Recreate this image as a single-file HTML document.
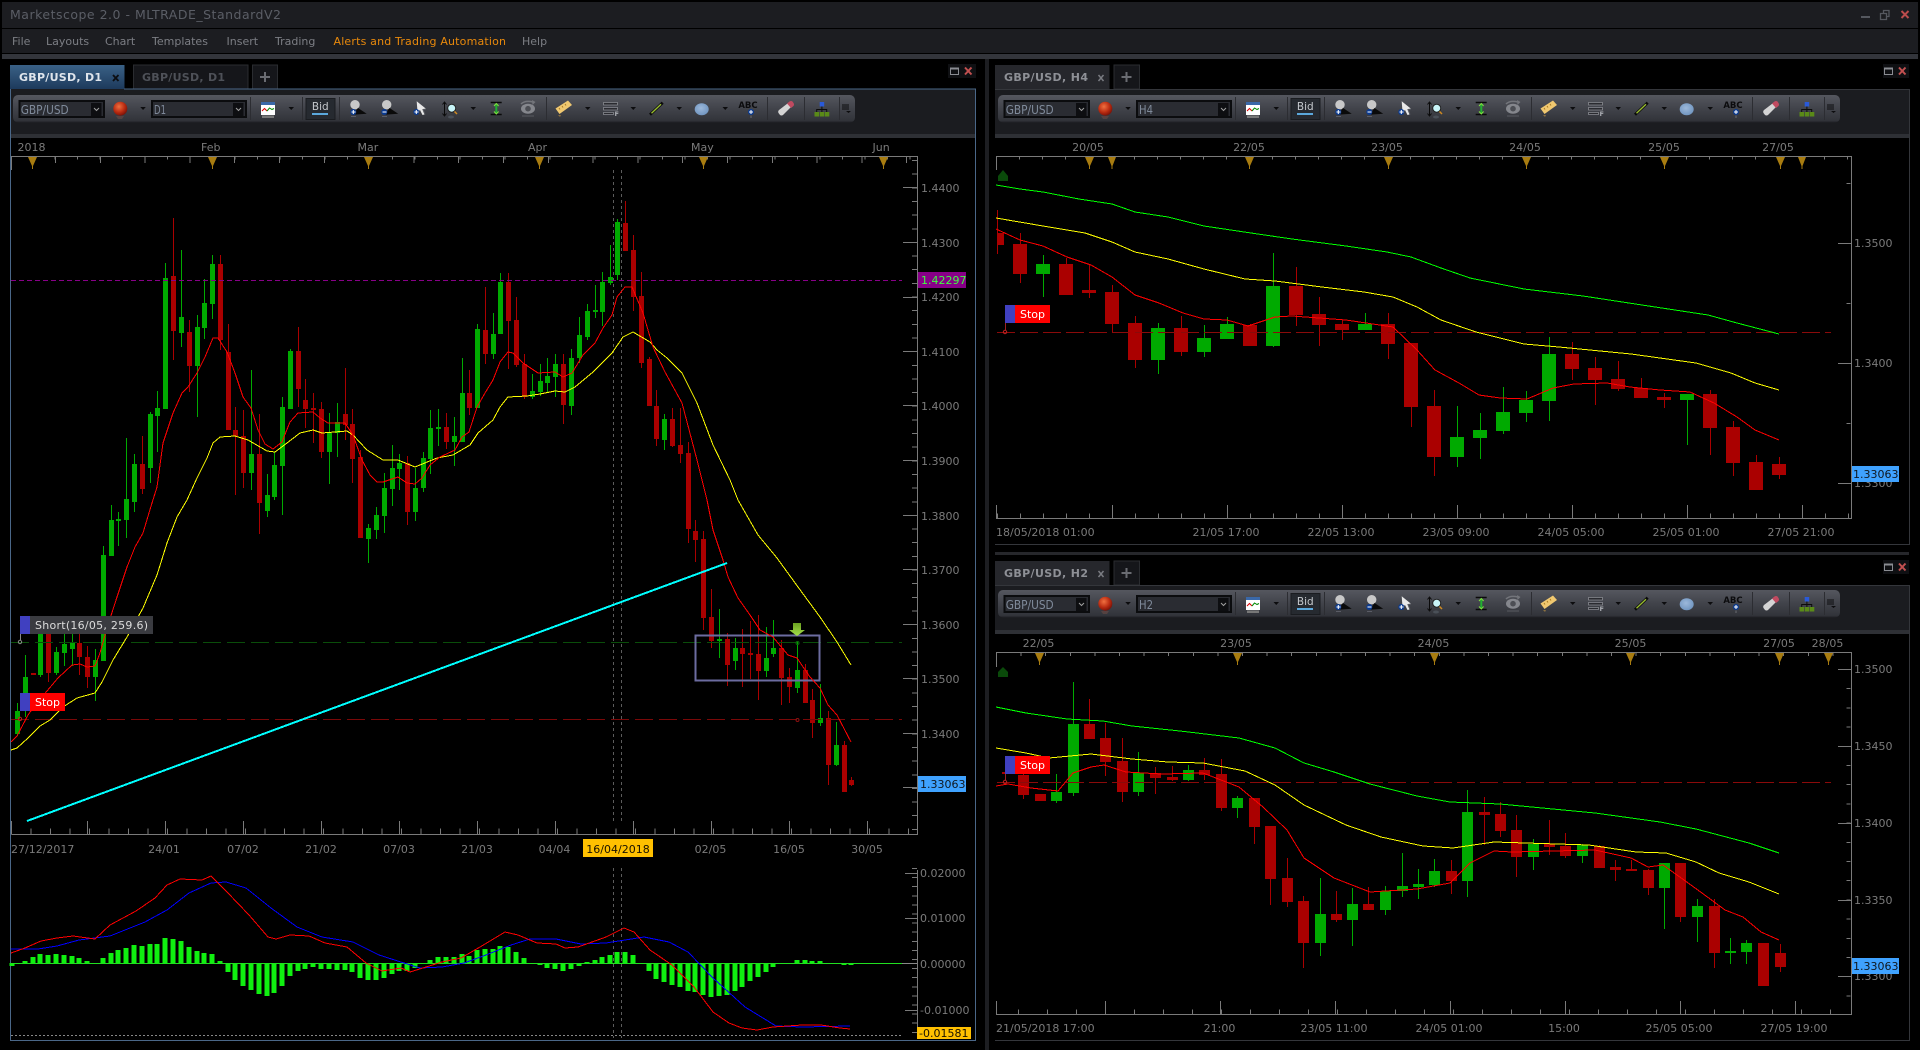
<!DOCTYPE html>
<html><head><meta charset="utf-8"><title>Marketscope 2.0</title>
<style>
html,body{margin:0;padding:0;background:#000;overflow:hidden}
svg{display:block}
text{font-family:"DejaVu Sans","Liberation Sans",sans-serif;font-size:11px;fill:#7b7b7b}
.c{text-anchor:middle}
.m{fill:#7c7e84}
.b{font-weight:bold}
.t{fill:#7f8a9a;font-size:12px}
.cr{shape-rendering:crispEdges}
.l{fill:none;stroke-width:1;shape-rendering:crispEdges}
</style></head><body>
<svg width="1920" height="1050" viewBox="0 0 1920 1050" xmlns="http://www.w3.org/2000/svg">
<defs>
<linearGradient id="tbg" x1="0" y1="0" x2="0" y2="1"><stop offset="0" stop-color="#55575f"/><stop offset=".5" stop-color="#41434a"/><stop offset=".93" stop-color="#32343a"/><stop offset="1" stop-color="#1f2024"/></linearGradient>
<linearGradient id="act" x1="0" y1="0" x2="0" y2="1"><stop offset="0" stop-color="#3a6186"/><stop offset="1" stop-color="#1d3a5c"/></linearGradient>
<linearGradient id="arr" x1="0" y1="0" x2="0" y2="1"><stop offset="0" stop-color="#6aa020"/><stop offset="1" stop-color="#a4e04a"/></linearGradient>
<radialGradient id="rb" cx=".4" cy=".35" r=".7"><stop offset="0" stop-color="#f07040"/><stop offset=".6" stop-color="#b82a10"/><stop offset="1" stop-color="#701008"/></radialGradient>
<radialGradient id="bb" cx=".45" cy=".4" r=".7"><stop offset="0" stop-color="#9cb8da"/><stop offset="1" stop-color="#6a90bc"/></radialGradient>
<g id="tb">
<rect x="13" y="95" width="842" height="27.500" rx="5" fill="url(#tbg)"/>
<rect x="19.500" y="101" width="84.500" height="16" fill="#2a2c32" stroke="#0b0c0e" stroke-width="2"/>
<rect x="91" y="103" width="10.500" height="13" fill="#0d0e11"/>
<path d="M94 108l2.500 2.500 2.500-2.500" fill="none" stroke="#a0a0a0"/>
<rect x="152" y="101" width="94" height="16" fill="#2a2c32" stroke="#0b0c0e" stroke-width="2"/>
<rect x="233" y="103" width="10.500" height="13" fill="#0d0e11"/>
<path d="M236 108l2.500 2.500 2.500-2.500" fill="none" stroke="#a0a0a0"/>
<circle cx="120.300" cy="108.700" r="7" fill="url(#rb)"/>
<path d="M116 116h8l-2 3h-4z" fill="#6a4a44" opacity=".6"/>
<path d="M140.300 107h5.500l-2.750 3zM288.500 107h5.500l-2.750 3zM470.500 107h5.500l-2.750 3zM585 107h5.500l-2.750 3zM630.500 107h5.500l-2.750 3zM676.500 107h5.500l-2.750 3zM722.500 107h5.500l-2.750 3z" fill="#0c0c0e"/>
<path d="M250.500 97v23M302.500 97v23M339.500 97v23M546.500 97v23M767.500 97v23M804.500 97v23M839.500 97v23" stroke="#2c2d32" class="cr"/>
<rect x="261" y="102" width="14" height="13" fill="#fff"/><rect x="261" y="102" width="14" height="3" fill="#3a68a8"/>
<path d="M262 111l2.500-2.500 2.500 2.500" fill="none" stroke="#d00"/><path d="M267 111l2.500-3 2.500 1.500 2-1" fill="none" stroke="#080"/>
<rect x="262" y="115.500" width="12" height="2.500" fill="#777"/>
<rect x="306" y="98.500" width="29" height="21" fill="#262a30" stroke="#1a1c20"/>
<rect x="312" y="113" width="16" height="2" fill="#5ba8dc"/>
<circle cx="355" cy="104.700" r="4.700" fill="#c8c8c8"/><path d="M358 108l8.700 5.700-13.700 1z" fill="#0a0a0a"/><circle cx="353.300" cy="112" r="3" fill="#0a3a90"/><path d="M351.500 112h4M353.300 110v4" stroke="#fff"/><path d="M351 116.500h5" stroke="#5a5c66"/>
<circle cx="386.700" cy="104.700" r="4.700" fill="#c8c8c8"/><path d="M389.500 108l8.700 5.700-13.700 1z" fill="#0a0a0a"/><circle cx="384.300" cy="112" r="3" fill="#0a3a90"/><path d="M382.500 112h4" stroke="#fff"/><path d="M382 116.500h5" stroke="#5a5c66"/>
<path d="M416.700 101.300l9.300 7.500-3.500.7 2 5-2 .5-2.500-5-2.500 2z" fill="#e8e8e8"/><path d="M426 109l-3 .5 2 5" fill="none" stroke="#5a5c62"/><circle cx="416.300" cy="112" r="3" fill="#0a3a90"/><path d="M414.500 112h4M416.300 110v4" stroke="#fff"/>
<path d="M444.500 103v12M442.500 104.500l2-2.500 2 2.500M442.500 113.500l2 2.500 2-2.500" fill="none" stroke="#0a0a0a"/><circle cx="451.700" cy="108.200" r="4" fill="#c8f4f8" stroke="#222"/><path d="M454.500 111.500l2.500 2.500" stroke="#d08a20" stroke-width="1.500"/><ellipse cx="451" cy="117" rx="3" ry="1.500" fill="#4a5058"/>
<path d="M490.700 102.500h11M490.700 114.500h11" stroke="#0a0a0a" stroke-width="1.500"/><path d="M496.300 103.500v10" stroke="#20b030" stroke-width="2"/><path d="M494 106l2.300-2.500 2.300 2.500M494 111.500l2.300 2.500 2.300-2.500" fill="none" stroke="#80e040"/>
<ellipse cx="528" cy="108.700" rx="7" ry="5" fill="#85878d"/><circle cx="528" cy="108.700" r="2.800" fill="#4c4e54"/><path d="M521 104c3-3 8-3 12-2" fill="none" stroke="#73757b" stroke-width="1.500"/><path d="M532 100l3.500 2-3 3z" fill="#73757b"/><path d="M522 116h12" stroke="#585a60"/>
<path d="M555.500 108.500l12.500-8 4 4.500-12.500 9z" fill="#f0c870"/><path d="M559 108l1 1.500M562 106l1 1.500M565 104l1 1.500" stroke="#a87a20"/><path d="M558 115l2 2 1-2z" fill="#8a7040"/>
<path d="M603.500 102.500h14v2.500h-14zM603.500 107.500h14v2.500h-14zM603.500 112.500h10v2h-10z" fill="#2a2b30" stroke="#8a8c92" stroke-width=".8"/>
<path d="M650 114.700l12.700-12" stroke="#0a0a0a" stroke-width="2.800"/><path d="M651.500 113.200l9.500-9" stroke="#98bc30" stroke-width="1.400"/>
<ellipse cx="701.700" cy="109.300" rx="7" ry="6" fill="url(#bb)"/>
<circle cx="751" cy="112" r="3" fill="#0a3a90"/><path d="M749 112h4M751 110v4" stroke="#fff"/><path d="M751 115.500v2.500" stroke="#6a6c72"/>
<path d="M779 110l8.500-6.500 3.500 3.500-8 8c-1 .7-2 .7-3 0l-1.500-2c-.5-1-.5-2 .5-3z" fill="#d4d4d4"/><path d="M787 103.500l2.500-2c1-.7 2-.7 3 0l1 1.500c.7 1 .7 2 0 3l-2.500 2z" fill="#c04a60"/>
<rect x="819.700" y="102" width="4.500" height="4.500" fill="#2a5ad8"/>
<path d="M821.900 106.500v3M816.700 112v-2.500h10v2.500M821.900 109.500v2.500" fill="none" stroke="#0c0c0c"/>
<rect x="814.500" y="112" width="4.500" height="4.500" fill="#5a8a18"/><rect x="819.700" y="112" width="4.500" height="4.500" fill="#5a8a18"/><rect x="824.800" y="112" width="4.500" height="4.500" fill="#5a8a18"/>
<path d="M842 105h7M842 107h7M842 109h7" stroke="#0c0c0e" class="cr"/><path d="M846 111h5l-2.500 2z" fill="#0c0c0e"/>
</g>
</defs>

<rect width="1920" height="1050" fill="#000"/>
<rect x="2" y="2" width="1916" height="26" fill="#1c1d21"/>
<rect x="2" y="29" width="1916" height="24" fill="#1c1d21"/>
<rect x="2" y="54" width="1916" height="5" fill="#33353b"/>
<text x="10" y="19" textLength="271" lengthAdjust="spacing" style="font-size:12.500px;fill:#5b5e66">Marketscope 2.0 - MLTRADE_StandardV2</text>
<text x="12" y="45" class="m">File</text><text x="46" y="45" class="m">Layouts</text><text x="105" y="45" class="m">Chart</text><text x="152" y="45" class="m">Templates</text><text x="226.500" y="45" class="m">Insert</text><text x="275" y="45" class="m">Trading</text>
<text x="333.500" y="45" textLength="172.500" lengthAdjust="spacing" style="fill:#e8890c">Alerts and Trading Automation</text>
<text x="522" y="45" class="m">Help</text>
<path d="M1861 16h9v2h-9z" fill="#55585f"/>
<path d="M1880.500 13.500h6v6h-6zM1883.500 13v-2.500h5.500v6h-2" fill="none" stroke="#55585f" stroke-width="1.300"/>
<path d="M1901.500 11l7 7M1908.500 11l-7 7" stroke="#bb4c4c" stroke-width="2"/>

<rect x="985" y="59" width="4" height="991" fill="#1d1e22"/>

<!-- left panel -->
<rect x="10" y="89" width="966" height="45" fill="#1b1c20"/>
<rect x="10" y="134" width="966" height="4" fill="#2e3035"/>
<rect x="10" y="65" width="114.500" height="24" fill="url(#act)"/>
<rect x="133.500" y="65" width="114.500" height="24" fill="#15161a" stroke="#2a2c30"/>
<rect x="252.500" y="65" width="25" height="24" fill="#15161a" stroke="#2a2c30"/>
<text x="19" y="81" class="b" textLength="83" lengthAdjust="spacing" style="fill:#dfe5ec">GBP/USD, D1</text>
<path d="M113 75l5.500 6M118.500 75l-5.500 6" stroke="#0c0e12" stroke-width="1.800"/>
<text x="142" y="81" class="b" textLength="83" lengthAdjust="spacing" style="fill:#4e5158">GBP/USD, D1</text>
<path d="M260 77h10M265 72v10" stroke="#6a6c72" stroke-width="2"/>
<rect x="948" y="64" width="28" height="14" fill="#0f1013"/>
<rect x="950.500" y="68.500" width="8" height="6" fill="none" stroke="#8a8c92" stroke-width="1"/><path d="M950 68.500h9" stroke="#8a8c92" stroke-width="2"/>
<path d="M965 67.500l6.500 7M971.500 67.500l-6.500 7" stroke="#c25050" stroke-width="2"/>
<use href="#tb"/>
<g><text x="20.700" y="114" class="t" textLength="48" lengthAdjust="spacingAndGlyphs">GBP/USD</text><text x="154" y="114" class="t" textLength="12" lengthAdjust="spacingAndGlyphs">D1</text><text x="320.300" y="110" class="c" style="fill:#c4c8cc;font-size:10.500px">Bid</text><text x="748" y="108" class="c" style="fill:#0c0c0e;font-size:8.500px;font-weight:bold">ABC</text><text x="614.500" y="116" style="fill:#a8aab0;font-size:6.500px;font-weight:bold">F</text></g>

<!-- main axes -->
<g class="cr" fill="none" stroke="#7a7a7a">
<path d="M11.500 170V156.500H917.500V834.500H11.500"/>
<path d="M917.500 870V1037"/>
<path d="M32 158H917" stroke-width="3" stroke-dasharray="1 21.500"/>
<path d="M55 160H917" stroke-width="6" stroke-dasharray="1 43.800" stroke-dashoffset="0"/>
<path d="M914.500 160V830" stroke-width="5" stroke-dasharray="1 12.650"/>
<path d="M903 187.500h14M903 242.500h14M903 297.500h14M903 351.500h14M903 405.500h14M903 460.500h14M903 515.500h14M903 569.500h14M903 624.500h14M903 678.500h14M903 733.500h14M903 787.500h14"/>
<path d="M11 831.500H917" stroke-width="6" stroke-dasharray="1 18.500"/>
<path d="M11.500 821v13M87.500 821v13M165.500 821v13M243.500 821v13M321.500 821v13M399.500 821v13M477.500 821v13M555.500 821v13M633.500 821v13M711.500 821v13M789.500 821v13M867.500 821v13"/>
<path d="M914.500 868V1037" stroke-width="5" stroke-dasharray="1 8.100"/>
<path d="M905 873.500h12M905 918.500h12M905 1010.500h12"/>
</g>
<path d="M10.500 89V1040.500H975.500V89H124" fill="none" stroke="#4a6788" class="cr"/>

<!-- triangles -->
<path id="t0" d="M28 157h9l-4 9v3h-1v-3zM208 157h9l-4 9v3h-1v-3zM364 157h9l-4 9v3h-1v-3zM535 157h9l-4 9v3h-1v-3zM699 157h9l-4 9v3h-1v-3zM879 157h9l-4 9v3h-1v-3z" fill="#a87c10"/>
<text x="17.500" y="151">2018</text><text x="201" y="151">Feb</text><text x="357.500" y="151">Mar</text><text x="528" y="151">Apr</text><text x="691" y="151">May</text><text x="872.500" y="151">Jun</text>
<g text-anchor="start"><text x="921" y="192">1.4400</text><text x="921" y="247">1.4300</text><text x="921" y="301">1.4200</text><text x="921" y="356">1.4100</text><text x="921" y="410">1.4000</text><text x="921" y="465">1.3900</text><text x="921" y="520">1.3800</text><text x="921" y="574">1.3700</text><text x="921" y="629">1.3600</text><text x="921" y="683">1.3500</text><text x="921" y="738">1.3400</text></g>
<text x="11" y="853">27/12/2017</text><text x="164" y="853" class="c">24/01</text><text x="243" y="853" class="c">07/02</text><text x="321" y="853" class="c">21/02</text><text x="399" y="853" class="c">07/03</text><text x="477" y="853" class="c">21/03</text><text x="554.500" y="853" class="c">04/04</text><text x="710.500" y="853" class="c">02/05</text><text x="789" y="853" class="c">16/05</text><text x="867" y="853" class="c">30/05</text>

<!-- crosshair -->
<path d="M613.500 170V821M621.500 170V821M613.500 868V1038M621.500 868V1038" stroke="#5c5c5c" stroke-dasharray="3 3" class="cr"/>

<!-- main candles -->
<g class="cr" fill="none">
<path stroke="#00aa00" d="M17.500 703V736M25.500 655V717M40.500 620V677M56.500 647V675M64.500 630V666M72.500 632V666M95.500 649V701M103.500 546V661M111.500 505V556M118.500 512V546M126.500 438V538M134.500 454V512M150.500 412V483M157.500 391V452M165.500 263V409M181.500 250V347M197.500 315V417M204.500 279V339M212.500 255V319M251.500 370V490M267.500 474V517M274.500 452V500M282.500 397V515M290.500 349V409M329.500 413V484M337.500 403V457M368.500 524V563M376.500 507V539M384.500 473V533M392.500 445V506M399.500 454V490M415.500 468V521M423.500 452V492M430.500 410V474M438.500 409V446M454.500 417V466M462.500 358V442M477.500 324V408M493.500 313V359M500.500 273V334M532.500 374V399M540.500 364V396M547.500 358V393M555.500 354V397M571.500 349V415M579.500 317V363M587.500 304V340M595.500 285V318M602.500 272V326M610.500 245V285M617.500 219V280M664.500 414V450M719.500 609V658M735.500 638V670M766.500 627V677M773.500 620V657M797.500 642V693M820.500 684V726M836.500 722V766"/>
<path stroke="#00aa00" stroke-width="5" d="M17.500 711V734M25.500 677V697M40.500 625V675M56.500 652V673M64.500 644V653M72.500 643V649M95.500 660V677M103.500 555V661M111.500 520V556M118.500 519V521M126.500 499V520M134.500 464V502M150.500 414V468M157.500 408V416M165.500 278V409M181.500 317V333M197.500 327V366M204.500 303V328M212.500 264V304M251.500 454V473M267.500 495V511M274.500 465V497M282.500 407V466M290.500 351V409M329.500 433V452M337.500 422V433M368.500 528V539M376.500 515V530M384.500 488V516M392.500 468V489M399.500 463V469M415.500 488V512M423.500 458V488M430.500 428V459M438.500 427V429M454.500 436V442M462.500 393V442M477.500 329V408M493.500 334V354M500.500 282V334M532.500 391V397M540.500 381V392M547.500 376V383M555.500 364V377M571.500 358V406M579.500 335V358M587.500 311V337M595.500 310V312M602.500 282V312M610.500 277V283M617.500 222V275M664.500 419V440M719.500 639V641M735.500 648V661M766.500 658V671M773.500 648V654M797.500 670V688M820.500 718V723M836.500 745V765"/>
<path stroke="#aa0000" d="M48.500 620V682M79.500 632V675M87.500 646V688M142.500 436V494M173.500 218V360M189.500 320V392M220.500 255V350M228.500 324V430M235.500 407V495M243.500 410V488M259.500 414V534M298.500 327V407M305.500 379V428M313.500 393V443M321.500 402V458M345.500 368V440M352.500 409V483M360.500 450V538M407.500 456V525M446.500 413V449M469.500 370V415M485.500 287V364M508.500 273V369M516.500 297V367M524.500 354V399M563.500 354V424M625.500 201V251M633.500 235V311M641.500 272V368M649.500 357V406M656.500 390V446M672.500 408V447M680.500 408V463M688.500 442V543M695.500 520V562M703.500 531V630M711.500 589V648M727.500 633V686M742.500 629V687M750.500 621V679M758.500 615V700M781.500 640V705M789.500 668V703M805.500 664V703M812.500 689V738M828.500 711V785M844.500 741V792M851.500 777V786"/>
<path stroke="#aa0000" stroke-width="5" d="M33.500 673V675M48.500 628V673M79.500 643V657M87.500 657V677M142.500 464V489M173.500 276V331M189.500 332V366M220.500 264V340M228.500 352V430M235.500 430V436M243.500 436V473M259.500 454V503M298.500 351V389M305.500 400V409M313.500 408V410M321.500 409V452M345.500 414V425M352.500 424V459M360.500 457V538M407.500 463V512M446.500 427V442M469.500 393V408M485.500 330V354M508.500 282V321M516.500 320V365M524.500 364V397M563.500 364V405M625.500 223V251M633.500 250V297M641.500 296V363M649.500 359V406M656.500 406V439M672.500 419V446M680.500 445V454M688.500 453V529M695.500 531V540M703.500 539V618M711.500 617V641M727.500 639V665M742.500 648V654M750.500 653V655M758.500 654V671M781.500 648V678M789.500 677V687M805.500 670V703M812.500 700V723M828.500 718V765M844.500 745V792M851.500 780V785"/>
</g>
<path d="M11 280.500H902" stroke="#880088" stroke-dasharray="5 3" class="cr"/>
<path d="M11 642.500H902" stroke="#0a4d0a" stroke-dasharray="18 6" class="cr"/>
<path d="M11 719.500H902" stroke="#7a0808" stroke-dasharray="18 6" class="cr"/>
<rect x="695.500" y="635.500" width="124" height="45" fill="none" stroke="#6c6ca0" stroke-width="2" class="cr"/>
<polyline class="l" stroke="#ff0" points="11,750 17,748 28,738 40,726 50,720 63,707 77,698 95,693 102,682 113,660 127,637 143,608 157,575 167,543 177,517 187,500 197,478 207,458 213,443 220,437 235,436 248,440 267,451 275,452 287,443 300,433 313,430 322,433 347,431 353,435 367,450 383,460 398,460 415,467 437,458 453,455 470,445 478,433 493,420 500,407 508,397 527,396 540,394 555,391 565,392 575,387 593,372 612,353 623,337 633,332 650,342 657,350 667,358 682,373 697,403 713,445 730,480 738,500 758,535 777,558 798,587 820,617 837,642 851,665"/>
<polyline class="l" stroke="#f00" points="11,742 17,736 28,715 33,708 47,691 58,678 72,665 80,664 87,667 95,666 100,653 107,628 117,597 127,567 135,547 143,533 152,503 157,487 163,443 173,413 182,393 188,387 197,373 205,357 213,338 218,338 227,352 235,373 243,397 251,408 258,430 265,444 273,449 282,442 290,422 298,413 313,412 320,418 328,423 345,423 353,435 362,460 370,475 377,482 383,482 398,477 407,483 415,484 422,478 430,465 440,457 455,450 462,437 469,432 477,407 485,393 493,380 500,362 508,352 513,353 523,363 538,373 555,372 563,377 572,373 583,355 595,343 603,328 612,315 617,297 625,287 632,287 643,313 653,347 665,372 682,403 697,460 707,500 713,530 723,560 728,577 738,598 750,615 760,630 773,637 788,655 797,658 810,677 820,688 828,705 837,715 851,742"/>
<path d="M27 821L727 563" stroke="#00ffff" stroke-width="2" fill="none" class="cr"/>
<path d="M793 623h8v7h4l-8 6-8-6h4z" fill="url(#arr)"/>
<circle cx="797.500" cy="643" r="1.500" fill="none" stroke="#0a6a0a"/><circle cx="797.500" cy="720" r="1.500" fill="none" stroke="#8a1010"/>
<path d="M20.500 634v6" stroke="#888"/><circle cx="20" cy="642" r="1.700" fill="none" stroke="#888"/><circle cx="20" cy="719" r="1.700" fill="none" stroke="#c02020"/>
<rect x="20" y="616" width="133" height="18" fill="#3a3b40"/><rect x="20" y="616" width="10" height="18" fill="#4040c0"/>
<text x="35" y="629" textLength="113" lengthAdjust="spacing" style="fill:#dcdcdc">Short(16/05, 259.6)</text>
<rect x="20" y="693" width="45" height="18" fill="#f00"/><rect x="20" y="693" width="10" height="18" fill="#4040c0"/>
<text x="35" y="706" style="fill:#fff">Stop</text>
<rect x="918" y="272" width="48" height="16" fill="#880088"/><text x="921" y="284" style="fill:#40ff40">1.42297</text>
<rect x="918" y="776" width="48" height="16" fill="#3fa2ff"/><text x="920" y="788" style="fill:#101820">1.33063</text>
<rect x="583" y="839" width="70" height="18" fill="#ffc000"/><text x="618" y="853" class="c" style="fill:#1a1200">16/04/2018</text>

<!-- MACD -->
<path d="M11 1035.500H902" stroke="#888" stroke-dasharray="2 2" class="cr"/>
<path class="cr" fill="none" stroke="#10f010" stroke-width="5" d="M12 963V966M25 963V961M33 963V957M40 963V954M48 963V955M56 963V954M64 963V955M72 963V956M79 963V958M87 963V961M103 963V958M111 963V953M118 963V950M126 963V948M134 963V945M142 963V946M150 963V944M157 963V944M165 963V938M173 963V939M181 963V941M189 963V947M197 963V951M204 963V953M212 963V954M220 963V961M228 963V972M235 963V980M243 963V986M251 963V990M259 963V994M267 963V996M274 963V993M282 963V986M290 963V976M298 963V971M305 963V969M313 963V967M321 963V969M329 963V969M337 963V970M345 963V970M352 963V972M360 963V978M368 963V980M376 963V980M384 963V978M392 963V974M399 963V971M407 963V971M415 963V968M430 963V960M438 963V957M446 963V957M454 963V957M462 963V954M469 963V956M477 963V950M485 963V949M493 963V949M500 963V946M508 963V947M516 963V952M524 963V958M540 963V965M547 963V968M555 963V969M563 963V971M571 963V969M579 963V966M587 963V962M595 963V960M602 963V957M610 963V955M617 963V952M625 963V952M633 963V955M649 963V971M656 963V979M664 963V982M672 963V985M680 963V987M688 963V991M695 963V992M703 963V995M711 963V997M719 963V996M727 963V995M735 963V991M742 963V987M750 963V981M758 963V977M766 963V972M773 963V967M781 963V964M797 963V960M805 963V960M812 963V961M820 963V961M844 963V965M851 963V965"/>
<path d="M11 963.500H902" stroke="#20e020" class="cr"/><path d="M902 963.500H917" stroke="#888" class="cr"/>
<polyline class="l" stroke="#0000ff" points="11,949 38,949 57,946 79,940 110,936 145,922 167,910 189,893 211,883 226,882 246,888 271,908 297,927 322,937 353,942 379,955 404,963 420,968 442,967 464,963 486,955 511,945 530,939 556,939 581,944 606,943 644,937 669,942 688,952 713,978 745,1007 776,1026 802,1027 850,1026"/>
<polyline class="l" stroke="#ff0000" points="11,953 25,948 41,941 57,938 73,936 95,939 110,925 136,911 155,898 167,885 180,879 202,880 211,876 227,892 249,915 268,937 276,939 290,935 309,936 325,943 347,947 366,963 382,971 401,968 410,972 426,967 442,962 461,958 480,947 505,932 518,935 537,943 556,944 565,948 578,947 606,937 624,928 634,932 650,950 672,965 694,987 713,1012 729,1023 742,1028 757,1030 773,1027 802,1025 821,1025 840,1028 850,1029"/>
<text x="920" y="877">0.02000</text><text x="920" y="922">0.01000</text><text x="920" y="968">0.00000</text><text x="920" y="1014">-0.01000</text>
<rect x="917" y="1027" width="54" height="12" fill="#ffc000"/><text x="919" y="1037" style="fill:#1a1200">-0.01581</text>

<!-- H4 panel -->
<rect x="995" y="89" width="914" height="45" fill="#1b1c20"/>
<rect x="995" y="134" width="914" height="4" fill="#2e3035"/>
<rect x="995" y="65" width="114.500" height="24" fill="#26272c"/>
<rect x="1114" y="65" width="25.500" height="24" fill="#15161a" stroke="#2a2c30"/>
<text x="1004" y="81" class="b" textLength="84" lengthAdjust="spacing" style="fill:#8e9096">GBP/USD, H4</text>
<path d="M1098.500 75l5 6M1103.500 75l-5 6" stroke="#7a7c82" stroke-width="1.500"/>
<path d="M1121.500 77h10M1126.500 72v10" stroke="#6a6c72" stroke-width="2"/>
<rect x="1883" y="64" width="26" height="14" fill="#0f1013"/>
<rect x="1884.500" y="68.500" width="8" height="6" fill="none" stroke="#8a8c92"/><path d="M1884 68.500h9" stroke="#8a8c92" stroke-width="2"/>
<path d="M1899 67.500l6.500 7M1905.500 67.500l-6.500 7" stroke="#c25050" stroke-width="2"/>
<use href="#tb" x="985"/>
<g transform="translate(985 0)"><text x="20.700" y="114" class="t" textLength="48" lengthAdjust="spacingAndGlyphs">GBP/USD</text><text x="154" y="114" class="t" textLength="14" lengthAdjust="spacingAndGlyphs">H4</text><text x="320.300" y="110" class="c" style="fill:#c4c8cc;font-size:10.500px">Bid</text><text x="748" y="108" class="c" style="fill:#0c0c0e;font-size:8.500px;font-weight:bold">ABC</text><text x="614.500" y="116" style="fill:#a8aab0;font-size:6.500px;font-weight:bold">F</text></g>
<g class="cr" fill="none" stroke="#7a7a7a">
<path d="M996.500 170V156.500H1851.500V518.500H996.500V505"/>
<path d="M996 158H1851" stroke-width="3" stroke-dasharray="1 22"/>
<path d="M1848.500 183V500" stroke-width="4" stroke-dasharray="1 59"/>
<path d="M1838 243.500h13M1838 363.500h13M1838 483.500h13"/>
<path d="M997 516H1851" stroke-width="5" stroke-dasharray="1 22"/>
<path d="M1112.500 505v13M1227.500 505v13M1342.500 505v13M1457.500 505v13M1572.500 505v13M1687.500 505v13M1802.500 505v13"/>
</g>
<path d="M995 89.500H1909.500V544.500H995" fill="none" stroke="#34363b" class="cr"/>
<path d="M1085 157h9l-4 9v3h-1v-3zM1108 157h8l-3.500 9v3h-1v-3zM1245 157h9l-4 9v3h-1v-3zM1384 157h9l-4 9v3h-1v-3zM1522 157h9l-4 9v3h-1v-3zM1660 157h9l-4 9v3h-1v-3zM1776 157h9l-4 9v3h-1v-3zM1798 157h8l-3.500 9v3h-1v-3z" fill="#a87c10"/>
<text x="1088" y="151" class="c">20/05</text><text x="1249" y="151" class="c">22/05</text><text x="1387" y="151" class="c">23/05</text><text x="1525" y="151" class="c">24/05</text><text x="1664" y="151" class="c">25/05</text><text x="1778" y="151" class="c">27/05</text>
<text x="1854" y="247">1.3500</text><text x="1854" y="367">1.3400</text><text x="1854" y="487">1.3300</text>
<text x="996" y="536">18/05/2018 01:00</text><text x="1226" y="536" class="c">21/05 17:00</text><text x="1341" y="536" class="c">22/05 13:00</text><text x="1456" y="536" class="c">23/05 09:00</text><text x="1571" y="536" class="c">24/05 05:00</text><text x="1686" y="536" class="c">25/05 01:00</text><text x="1801" y="536" class="c">27/05 21:00</text>
<g class="cr" fill="none">
<path stroke="#00aa00" d="M1043.500 255V297M1158.500 323V374M1204.500 325V357M1227.500 317V339M1273.500 253V347M1365.500 313V330M1457.500 406V467M1480.500 413V459M1503.500 387V434M1526.500 391V422M1549.500 337V421M1687.500 394V445"/>
<path stroke="#00aa00" stroke-width="14" d="M1043 264V274M1158 328V360M1204 338V352M1227 324V339M1273 286V346M1365 324V330M1457 437V457M1480 430V438M1503 412V431M1526 400V413M1549 354V401M1687 394V400"/>
<path stroke="#aa0000" d="M997.500 210V254M1020.500 233V283M1066.500 258V295M1089.500 265V298M1112.500 285V332M1135.500 316V368M1181.500 316V356M1250.500 324V346M1296.500 267V326M1319.500 297V346M1342.500 320V340M1388.500 313V359M1411.500 343V427M1434.500 390V476M1572.500 342V380M1595.500 357V405M1618.500 361V391M1641.500 378V398M1664.500 393V408M1710.500 390V455M1733.500 421V476M1756.500 455V490M1779.500 457V479"/>
<path stroke="#aa0000" stroke-width="14" d="M1020 244V274M1066 264V295M1089 290V293M1112 292V324M1135 323V360M1181 328V352M1250 325V346M1296 286V315M1319 314V325M1342 324V330M1388 324V344M1411 343V407M1434 406V457M1572 354V369M1595 368V380M1618 379V389M1641 388V398M1664 397V400M1710 394V428M1733 427V463M1756 462V490M1779 464V475"/>
</g>
<rect x="997" y="233" width="7" height="12" fill="#aa0000"/>
<path d="M997 332.500H1831" stroke="#8a0a0a" stroke-dasharray="18 5" class="cr"/>
<polyline class="l" stroke="#00ff00" points="996,185 1020,189 1043,192 1079,199 1112,204 1135,212 1168,217 1204,226 1251,233 1292,239 1346,246 1387,252 1411,257 1441,268 1470,278 1524,289 1583,296 1642,305 1708,315 1737,323 1779,334"/>
<polyline class="l" stroke="#ffff00" points="996,218 1043,226 1085,233 1112,242 1135,252 1168,259 1204,269 1245,279 1275,281 1322,287 1364,292 1393,297 1417,307 1441,320 1476,332 1524,344 1559,347 1631,354 1696,363 1731,373 1755,383 1779,390"/>
<polyline class="l" stroke="#ff0000" points="996,229 1020,240 1043,246 1067,257 1091,265 1112,277 1135,295 1159,303 1183,313 1204,319 1227,320 1248,326 1275,317 1292,316 1346,320 1393,327 1417,350 1435,370 1459,383 1479,395 1500,398 1527,399 1553,388 1574,384 1607,383 1630,387 1660,390 1690,392 1714,403 1737,417 1755,430 1779,440"/>
<path d="M1003 170l5 6v5h-10v-5z" fill="#0a4a0a"/>
<path d="M1005.500 323v7" stroke="#a02020"/><circle cx="1005" cy="332" r="1.700" fill="none" stroke="#c02020"/>
<rect x="1005" y="305" width="45" height="18" fill="#f00"/><rect x="1005" y="305" width="10" height="18" fill="#4040c0"/>
<text x="1020" y="318" style="fill:#fff">Stop</text>
<rect x="1852" y="466" width="47" height="16" fill="#3fa2ff"/><text x="1853" y="478" style="fill:#101820">1.33063</text>

<!-- H2 panel -->
<rect x="995" y="552" width="914" height="3" fill="#26272b"/>
<rect x="995" y="585" width="914" height="45" fill="#1b1c20"/>
<rect x="995" y="630" width="914" height="4" fill="#2e3035"/>
<rect x="995" y="561" width="114.500" height="24" fill="#26272c"/>
<rect x="1114" y="561" width="25.500" height="24" fill="#15161a" stroke="#2a2c30"/>
<text x="1004" y="577" class="b" textLength="84" lengthAdjust="spacing" style="fill:#8e9096">GBP/USD, H2</text>
<path d="M1098.500 571l5 6M1103.500 571l-5 6" stroke="#7a7c82" stroke-width="1.500"/>
<path d="M1121.500 573h10M1126.500 568v10" stroke="#6a6c72" stroke-width="2"/>
<rect x="1883" y="560" width="26" height="14" fill="#0f1013"/>
<rect x="1884.500" y="564.500" width="8" height="6" fill="none" stroke="#8a8c92"/><path d="M1884 564.500h9" stroke="#8a8c92" stroke-width="2"/>
<path d="M1899 563.500l6.500 7M1905.500 563.500l-6.500 7" stroke="#c25050" stroke-width="2"/>
<use href="#tb" x="985" y="495"/>
<g transform="translate(985 495)"><text x="20.700" y="114" class="t" textLength="48" lengthAdjust="spacingAndGlyphs">GBP/USD</text><text x="154" y="114" class="t" textLength="14" lengthAdjust="spacingAndGlyphs">H2</text><text x="320.300" y="110" class="c" style="fill:#c4c8cc;font-size:10.500px">Bid</text><text x="748" y="108" class="c" style="fill:#0c0c0e;font-size:8.500px;font-weight:bold">ABC</text><text x="614.500" y="116" style="fill:#a8aab0;font-size:6.500px;font-weight:bold">F</text></g>
<g class="cr" fill="none" stroke="#7a7a7a">
<path d="M996.500 667V652.500H1851.500V1014.500H996.500V1001"/>
<path d="M996 654.500H1851" stroke-width="3" stroke-dasharray="1 23.600"/>
<path d="M1848.500 669V1010" stroke-width="4" stroke-dasharray="1 18.200"/>
<path d="M1838 669.500h13M1838 746.500h13M1838 823.500h13M1838 900.500h13M1838 976.500h13"/>
<path d="M1018 1012H1851" stroke-width="5" stroke-dasharray="1 28"/>
<path d="M1105.500 1001v13M1220.500 1001v13M1335.500 1001v13M1450.500 1001v13M1565.500 1001v13M1680.500 1001v13M1795.500 1001v13"/>
</g>
<path d="M995 585.500H1909.500V1040.500H995" fill="none" stroke="#34363b" class="cr"/>
<path d="M1035 653h9l-4 9v3h-1v-3zM1233 653h9l-4 9v3h-1v-3zM1430 653h9l-4 9v3h-1v-3zM1626 653h9l-4 9v3h-1v-3zM1775 653h9l-4 9v3h-1v-3zM1824 653h9l-4 9v3h-1v-3z" fill="#a87c10"/>
<text x="1038.500" y="647" class="c">22/05</text><text x="1236" y="647" class="c">23/05</text><text x="1433.500" y="647" class="c">24/05</text><text x="1630.500" y="647" class="c">25/05</text><text x="1779" y="647" class="c">27/05</text><text x="1827.500" y="647" class="c">28/05</text>
<text x="1854" y="673">1.3500</text><text x="1854" y="750">1.3450</text><text x="1854" y="827">1.3400</text><text x="1854" y="904">1.3350</text><text x="1854" y="980">1.3300</text>
<text x="996" y="1032">21/05/2018 17:00</text><text x="1219.500" y="1032" class="c">21:00</text><text x="1334" y="1032" class="c">23/05 11:00</text><text x="1449" y="1032" class="c">24/05 01:00</text><text x="1564" y="1032" class="c">15:00</text><text x="1679" y="1032" class="c">25/05 05:00</text><text x="1794" y="1032" class="c">27/05 19:00</text>
<g class="cr" fill="none">
<path stroke="#00aa00" d="M1056.500 774V803M1073.500 682V796M1138.500 752V796M1188.500 765V781M1237.500 796V818M1320.500 878V956M1352.500 888V946M1385.500 886V915M1402.500 853V897M1418.500 869V899M1434.500 859V887M1467.500 790V897M1533.500 839V870M1582.500 844V863M1664.500 863V929M1697.500 899V942M1730.500 938V964M1746.500 940V964"/>
<path stroke="#00aa00" stroke-width="11" d="M1056.500 792V801M1073.500 724V793M1138.500 773V792M1188.500 770V780M1237.500 798V808M1320.500 914V943M1352.500 904V920M1385.500 891V910M1402.500 886V891M1418.500 884V887M1434.500 871V885M1467.500 812V881M1533.500 844V857M1582.500 845V856M1664.500 863V888M1697.500 906V917M1730.500 951V953M1746.500 943V952"/>
<path stroke="#aa0000" d="M1023.500 763V799M1040.500 794V801M1089.500 699V739M1105.500 723V776M1122.500 738V802M1155.500 767V794M1172.500 766V781M1204.500 758V780M1221.500 759V811M1254.500 798V844M1270.500 826V905M1287.500 858V907M1303.500 896V968M1336.500 891V922M1368.500 887V910M1451.500 860V894M1484.500 797V845M1500.500 802V837M1516.500 815V877M1549.500 820V855M1565.500 833V858M1599.500 845V868M1615.500 860V881M1631.500 860V871M1648.500 869V895M1680.500 863V922M1714.500 899V968M1763.500 943V986M1780.500 944V972"/>
<path stroke="#aa0000" stroke-width="11" d="M1007.500 772V774M1023.500 775V795M1040.500 794V801M1089.500 724V739M1105.500 738V762M1122.500 761V792M1155.500 773V778M1172.500 777V780M1204.500 770V775M1221.500 774V808M1254.500 798V827M1270.500 826V879M1287.500 878V902M1303.500 901V943M1336.500 914V920M1368.500 904V910M1451.500 871V881M1484.500 812V815M1500.500 814V831M1516.500 830V857M1549.500 844V847M1565.500 846V856M1599.500 846V868M1615.500 867V870M1631.500 869V871M1648.500 870V888M1680.500 863V917M1714.500 906V953M1763.500 943V986M1780.500 953V967"/>
</g>
<path d="M997 782.500H1831" stroke="#8a0a0a" stroke-dasharray="18 5" class="cr"/>
<polyline class="l" stroke="#00ff00" points="996,707 1026,713 1067,719 1103,721 1132,726 1180,731 1239,738 1275,748 1304,763 1334,772 1370,784 1417,796 1450,802 1500,804 1595,813 1660,822 1696,829 1749,843 1779,853"/>
<polyline class="l" stroke="#ffff00" points="996,748 1026,753 1049,758 1091,754 1132,759 1168,762 1203,763 1245,771 1275,785 1304,805 1346,825 1381,837 1423,846 1453,848 1494,842 1589,845 1636,852 1666,853 1696,862 1719,873 1749,882 1779,894"/>
<polyline class="l" stroke="#ff0000" points="996,786 1008,784 1031,788 1058,791 1073,773 1091,767 1104,765 1126,772 1162,774 1203,773 1239,787 1263,807 1287,830 1304,858 1334,878 1370,892 1417,889 1450,883 1470,863 1494,851 1512,852 1595,850 1631,858 1648,867 1663,865 1684,880 1702,893 1725,910 1743,917 1761,932 1779,940"/>
<path d="M1003 667l5 5v5h-10v-5z" fill="#0a4a0a"/>
<path d="M1005.500 774v6" stroke="#a02020"/><circle cx="1005" cy="782" r="1.700" fill="none" stroke="#c02020"/>
<rect x="1005" y="756" width="45" height="18" fill="#f00"/><rect x="1005" y="756" width="10" height="18" fill="#4040c0"/>
<text x="1020" y="769" style="fill:#fff">Stop</text>
<rect x="1852" y="958" width="47" height="16" fill="#3fa2ff"/><text x="1853" y="970" style="fill:#101820">1.33063</text>
</svg>
</body></html>
